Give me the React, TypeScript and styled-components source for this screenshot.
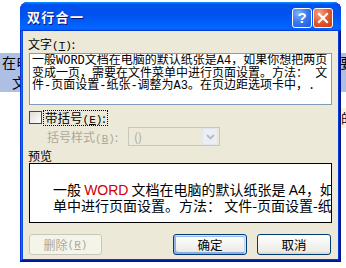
import React from "react";
import styled, { createGlobalStyle, css } from "styled-components";

const GlobalStyle = createGlobalStyle`
  html, body { margin: 0; padding: 0; background: #fff; }
  body {
    width: 346px;
    height: 268px;
    overflow: hidden;
    font-family: "SimSun", "Noto Sans CJK SC", sans-serif;
    color: #000;
  }
  * { box-sizing: border-box; }
`;

const Page = styled.div`
  position: relative;
  width: 346px;
  height: 268px;
  overflow: hidden;
  background: #fff;
`;

const DocumentArea = styled.div`
  padding-top: 53px;
  font-family: "Noto Sans CJK SC", sans-serif;
  font-size: 14px;
`;

const SelLine = styled.div<{ $indent: number; $top?: number }>`
  height: 19.5px;
  line-height: 19.5px;
  padding-top: ${(p) => p.$top ?? 0}px;
  padding-left: ${(p) => p.$indent}px;
  background: #adc0e3;
  white-space: nowrap;
  overflow: hidden;
`;

const MarkerRow = styled.div`
  margin-top: 16px;
  display: flex;
  justify-content: flex-end;
`;

const Marker = styled.span`
  width: 6px;
  height: 20px;
  border-left: 1px solid #e3a24a;
  background: #fff4d8;
  font-size: 13px;
  line-height: 20px;
  overflow: hidden;
  white-space: nowrap;
`;

const Window = styled.div`
  position: absolute;
  left: 20px;
  top: 2px;
  width: 321px;
  height: 260px;
  display: flex;
  flex-direction: column;
  padding: 0 3px 3px;
  background: #ece9d8;
  border-radius: 8px 8px 0 0;
  box-shadow: inset -1px -1px #00138c, inset 1px 1px #0831d9,
    inset -2px -2px #001ea0, inset 2px 2px #166aee, inset -3px -3px #003bda,
    inset 3px 3px #0855dd;
`;

const TitleBar = styled.div`
  height: 29px;
  margin: 0 -3px;
  padding: 0 8px 0 7px;
  display: flex;
  align-items: center;
  justify-content: space-between;
  border-radius: 8px 8px 0 0;
  background: linear-gradient(
    180deg,
    #0997ff,
    #0053ee 8%,
    #0050ee 40%,
    #06f 88%,
    #06f 93%,
    #005bff 95%,
    #003dd7 96%,
    #003dd7
  );
`;

const Title = styled.span`
  color: #fff;
  font-family: "Noto Sans CJK SC", sans-serif;
  font-weight: 700;
  font-size: 13px;
  letter-spacing: 1.3px;
  text-shadow: 1px 1px #0f1089;
`;

const Controls = styled.div`
  display: flex;
  gap: 1px;
  margin-top: 2px;
`;

const CtrlButton = styled.div<{ $kind: "help" | "close" }>`
  width: 20px;
  height: 20px;
  border: 1px solid #fff;
  border-radius: 3px;
  display: flex;
  align-items: center;
  justify-content: center;
  ${(p) =>
    p.$kind === "help"
      ? css`
          background: radial-gradient(
            circle at 30% 25%,
            #7fb1ff 0%,
            #3c7cf0 45%,
            #1a55de 100%
          );
        `
      : css`
          background: radial-gradient(
            circle at 30% 25%,
            #f7a488 0%,
            #e2572d 50%,
            #c83c14 100%
          );
        `}
`;

const HelpMark = styled.span`
  color: #fff;
  font-family: "Liberation Sans", Arial, sans-serif;
  font-weight: 700;
  font-size: 15px;
  line-height: 1;
`;

const Body = styled.div`
  flex: 1;
  display: flex;
  flex-direction: column;
  padding: 5px 5px 0 5px;
`;

const Label = styled.div<{ $mt?: number }>`
  margin-top: ${(p) => p.$mt ?? 0}px;
  height: 15px;
  font-size: 12px;
  line-height: 15px;
`;

const TextBox = styled.div`
  margin: 2px 1px 0;
  height: 52px;
  border: 1px solid #7f9db9;
  background: #fff;
  padding: 1px 2px 0;
  font-family: "Liberation Mono", "Noto Sans CJK SC", monospace;
  font-size: 12px;
  line-height: 12.5px;
  white-space: pre;
  overflow: hidden;
`;

const CheckRow = styled.div`
  margin-top: 5px;
  height: 15px;
  padding-left: 1px;
  display: flex;
  align-items: center;
`;

const CheckBox = styled.span`
  width: 13px;
  height: 13px;
  border: 1px solid #1c5180;
  background: linear-gradient(135deg, #dcdcd7, #fff);
`;

const FocusLabel = styled.span`
  margin-left: 2px;
  padding: 0 1px;
  height: 14px;
  outline: 1px dotted #000;
  font-size: 12.5px;
  line-height: 14px;
`;

const StyleRow = styled.div`
  margin-top: 2px;
  height: 19px;
  padding-left: 19px;
  display: flex;
  align-items: center;
`;

const SubLabel = styled.span`
  width: 81px;
  font-size: 12px;
  color: #aca899;
`;

const Select = styled.div`
  width: 92px;
  height: 19px;
  border: 1px solid #c9c7ba;
  background: #ece9d8;
  padding: 0 1px 0 5px;
  display: flex;
  align-items: center;
  justify-content: space-between;
  font-size: 12px;
  color: #aca899;
`;

const DropButton = styled.span`
  width: 16px;
  height: 17px;
  border: 1px solid #e0e5ee;
  border-radius: 2px;
  background: #eceef4;
  display: flex;
  align-items: center;
  justify-content: center;
`;

const Preview = styled.div`
  margin: 0 1px;
  height: 60px;
  border: 1px solid #000;
  background: #fff;
  padding: 18px 0 0 23px;
  font-family: "Noto Sans CJK SC", sans-serif;
  font-size: 14px;
  line-height: 15px;
  white-space: nowrap;
  overflow: hidden;
`;

const Red = styled.span`
  color: #cc0000;
  font-family: "Liberation Sans", Arial, sans-serif;
`;

const Latin = styled.span`
  font-family: "Liberation Sans", Arial, sans-serif;
`;

const ButtonRow = styled.div`
  margin-top: 11px;
  padding: 0 2px 0 1px;
  display: flex;
  align-items: center;
`;

const RightGroup = styled.div`
  margin-left: auto;
  display: flex;
  gap: 10px;
`;

const XPButton = styled.div<{ $variant?: "default" | "disabled" }>`
  width: 74px;
  height: 21px;
  border: 1px solid #003c74;
  border-radius: 3px;
  background: linear-gradient(180deg, #fff, #ecebe6 86%, #d6d0c5);
  display: flex;
  align-items: center;
  justify-content: center;
  font-size: 12.5px;
  ${(p) =>
    p.$variant === "default" &&
    css`
      box-shadow: inset -1px 1px #cee7ff, inset 1px 2px #98b8ea,
        inset -2px 2px #bcd4f6, inset 1px -1px #89ade4,
        inset 2px -2px #89ade4;
    `}
  ${(p) =>
    p.$variant === "disabled" &&
    css`
      width: 73px;
      border-color: #c9c7ba;
      background: #f5f4ea;
      color: #aca899;
      font-size: 12px;
    `}
`;

const Paren = styled.span`
  font-family: "Liberation Mono", monospace;
  font-size: 11px;
`;

export default function App() {
  return (
    <Page>
      <GlobalStyle />
      <DocumentArea>
        <SelLine $indent={2} $top={0}>
          在电脑的默认纸张是A4，如果你想把两页变成一页，需要在文件菜单中进行页面设置
        </SelLine>
        <SelLine $indent={12}>文档在电脑的默认纸张是A4</SelLine>
        <MarkerRow>
          <Marker>的</Marker>
        </MarkerRow>
      </DocumentArea>

      <Window>
        <TitleBar>
          <Title>双行合一</Title>
          <Controls>
            <CtrlButton $kind="help">
              <HelpMark>?</HelpMark>
            </CtrlButton>
            <CtrlButton $kind="close">
              <svg width="12" height="12" viewBox="0 0 12 12">
                <path
                  d="M2 2 L10 10 M10 2 L2 10"
                  stroke="#fff"
                  strokeWidth="2.2"
                  strokeLinecap="square"
                />
              </svg>
            </CtrlButton>
          </Controls>
        </TitleBar>

        <Body>
          <Label>
            文字<Paren>(<u>T</u>)</Paren>:
          </Label>
          <TextBox>
            {"一般WORD文档在电脑的默认纸张是A4，如果你想把两页\n变成一页，需要在文件菜单中进行页面设置。方法： 文\n件-页面设置-纸张-调整为A3。在页边距选项卡中，."}
          </TextBox>

          <CheckRow>
            <CheckBox />
            <FocusLabel>
              带括号<Paren>(<u>E</u>)</Paren>:
            </FocusLabel>
          </CheckRow>

          <StyleRow>
            <SubLabel>
              括号样式<Paren>(<u>B</u>)</Paren>:
            </SubLabel>
            <Select>
              <span>()</span>
              <DropButton>
                <svg width="9" height="6" viewBox="0 0 9 6">
                  <path
                    d="M1 1 L4.5 4.5 L8 1"
                    stroke="#b4bccb"
                    strokeWidth="1.8"
                    fill="none"
                  />
                </svg>
              </DropButton>
            </Select>
          </StyleRow>

          <Label $mt={2}>预览</Label>
          <Preview>
            <div>
              一般 <Red>WORD</Red> 文档在电脑的默认纸张是 <Latin>A4</Latin>
              ，如果你想把两页变成一页，需要在文件菜单
            </div>
            <div>单中进行页面设置。方法：  文件-页面设置-纸张-调整为A3。</div>
          </Preview>

          <ButtonRow>
            <XPButton $variant="disabled">
              删除<Paren>(<u>R</u>)</Paren>
            </XPButton>
            <RightGroup>
              <XPButton $variant="default">确定</XPButton>
              <XPButton>取消</XPButton>
            </RightGroup>
          </ButtonRow>
        </Body>
      </Window>
    </Page>
  );
}
